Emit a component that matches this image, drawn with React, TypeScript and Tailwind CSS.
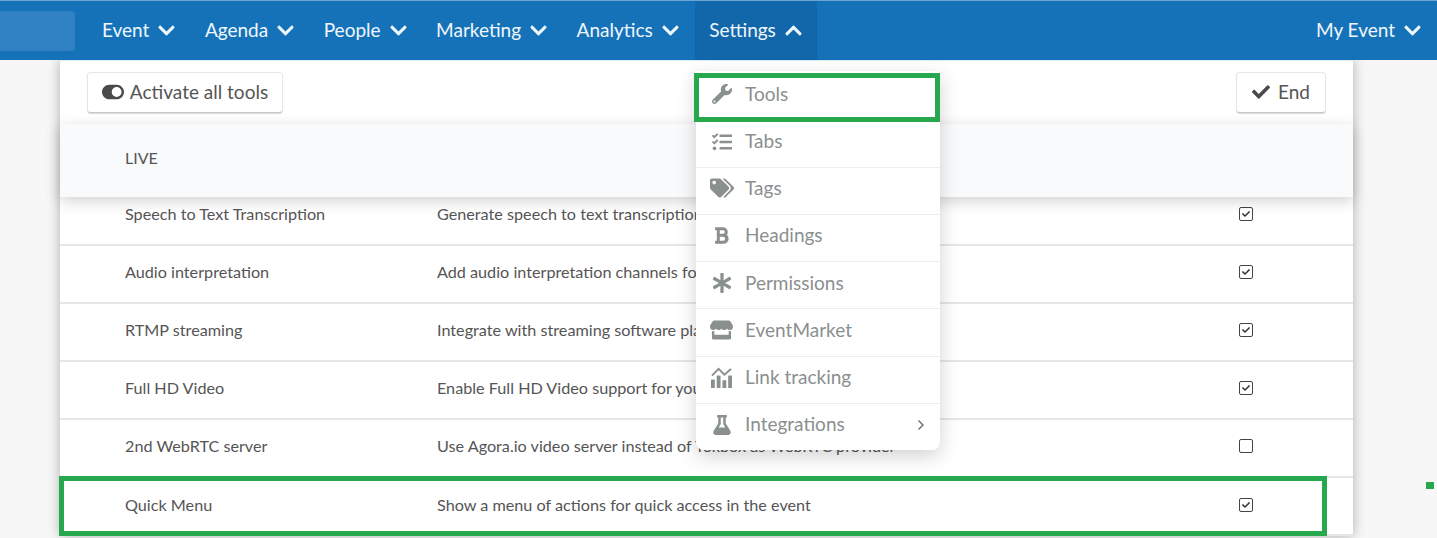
import React from 'react';
import { ChevronRight } from 'lucide-react';
import { FaAsterisk, FaBold, FaCheck, FaChevronDown, FaChevronUp, FaFlask, FaStore, FaTags, FaTasks, FaToggleOn, FaWrench } from 'react-icons/fa';

const navItems = ['Event', 'Agenda', 'People', 'Marketing', 'Analytics'];

const rows = [
  { name: 'Speech to Text Transcription', desc: 'Generate speech to text transcription for your sessions', checked: true, cls: 'h-[49px] pb-[13px]' },
  { name: 'Audio interpretation', desc: 'Add audio interpretation channels for your sessions', checked: true, cls: 'h-[58px] pb-[4px]' },
  { name: 'RTMP streaming', desc: 'Integrate with streaming software platforms', checked: true, cls: 'h-[58px] pb-[4px]' },
  { name: 'Full HD Video', desc: 'Enable Full HD Video support for your sessions', checked: true, cls: 'h-[58px] pb-[4px]' },
  { name: '2nd WebRTC server', desc: 'Use Agora.io video server instead of Tokbox as WebRTC provider', checked: false, cls: 'h-[58px] pb-[4px]' },
  { name: 'Quick Menu', desc: 'Show a menu of actions for quick access in the event', checked: true, cls: 'h-[58px] pb-[2px]' },
];

function LinkTrackingIcon() {
  return (
    <svg viewBox="0 0 24 22" className="w-[23px] h-[21px]" fill="currentColor">
      <rect x="1" y="13" width="4" height="9" rx="0.5" />
      <rect x="7" y="9" width="4" height="13" rx="0.5" />
      <rect x="13" y="14" width="4" height="8" rx="0.5" />
      <rect x="19" y="9" width="4" height="13" rx="0.5" />
      <path d="M2 9 L9 2 L15 8 L22 2" fill="none" stroke="currentColor" strokeWidth="2" />
    </svg>
  );
}

const menuItems = [
  { label: 'Tools', icon: <FaWrench className="w-5 h-5" />, cls: 'h-[51px] pb-[4px]' },
  { label: 'Tabs', icon: <FaTasks className="w-5 h-5" />, cls: 'h-[46px] pb-[6px]' },
  { label: 'Tags', icon: <FaTags className="w-6 h-6" />, cls: 'h-[47px] pb-[6px]' },
  { label: 'Headings', icon: <FaBold className="w-[15px] h-[19px]" />, cls: 'h-[47px] pb-[6px]' },
  { label: 'Permissions', icon: <FaAsterisk className="w-5 h-5" />, cls: 'h-[47px] pb-[4px]' },
  { label: 'EventMarket', icon: <FaStore className="w-[23px] h-5" />, cls: 'h-[48px] pb-[5px]' },
  { label: 'Link tracking', icon: <LinkTrackingIcon />, cls: 'h-[47px] pb-[6px]' },
  { label: 'Integrations', icon: <FaFlask className="w-5 h-5" />, cls: 'h-[46px] pb-[5px]' },
];

function Checkbox({ checked }: { checked: boolean }) {
  return (
    <span className="w-[14px] h-[14px] border-[1.5px] border-[#444] rounded-[2px] flex items-center justify-center bg-white">
      {checked && <FaCheck className="w-[8px] h-[8px] text-[#333]" />}
    </span>
  );
}

export default function App() {
  return (
    <div className="relative w-[1437px] h-[538px] overflow-hidden bg-[#f7f7f7] font-['Lato','Liberation_Sans',sans-serif]">
      <header className="relative z-20 h-[60px] bg-[#1572b9] border-t border-[#6ba4d3] flex items-center text-[19px] text-[#eef7fc]">
        <div className="w-[75px] h-[40px] bg-[#3182c4] rounded-r-[4px] shrink-0" />
        <nav className="flex items-center ml-[14px] h-full">
          {navItems.map(item => (
            <div key={item} className="flex items-center gap-[8px] pl-[13px] pr-[15.5px] h-full">
              <span>{item}</span>
              <FaChevronDown className="w-[19px] h-[19px]" />
            </div>
          ))}
          <div className="flex items-center gap-[8px] pl-[14px] pr-[14px] h-full bg-[#1267aa]">
            <span>Settings</span>
            <FaChevronUp className="w-[19px] h-[19px]" />
          </div>
        </nav>
        <div className="ml-auto mr-[15px] flex items-center gap-[8px]">
          <span>My Event</span>
          <FaChevronDown className="w-[19px] h-[19px]" />
        </div>
      </header>

      <main className="relative mx-[60px] w-[1293px] bg-white shadow-[0_0_12px_rgba(0,0,0,0.3)]">
        <div className="h-[64px] flex items-center justify-between px-[27px] pb-[1px] border-t border-[#dcecf5]">
          <button className="h-[41px] w-[196px] flex items-center justify-center gap-[6px] bg-white border border-[#e6e6e6] border-b-[#c8c8c8] rounded-[4px] shadow-[0_1px_1px_rgba(0,0,0,0.15)] text-[19px] text-[#555]">
            <FaToggleOn className="w-[22px] h-[20px] text-[#4a4a4a]" />
            Activate all tools
          </button>
          <button className="h-[41px] w-[90px] flex items-center justify-center gap-[8px] bg-white border border-[#e6e6e6] border-b-[#c8c8c8] rounded-[4px] shadow-[0_1px_1px_rgba(0,0,0,0.15)] text-[19px] text-[#555]">
            <FaCheck className="w-[18px] h-[18px] text-[#4a4a4a]" />
            End
          </button>
        </div>

        <div className="relative z-10 h-[73px] bg-[#f9fafc] pl-[65px] pt-[22px] text-[16px] text-[#555] shadow-[0_4px_14px_rgba(0,0,0,0.18)]">
          LIVE
        </div>

        {rows.map(row => (
          <div key={row.name} className={`${row.cls} flex items-center border-b-2 border-[#e6e6e6] pl-[65px] pr-[100px] text-[16.2px] text-[#555]`}>
            <span className="w-[312px] shrink-0">{row.name}</span>
            <span className="flex-1">{row.desc}</span>
            <Checkbox checked={row.checked} />
          </div>
        ))}
      </main>

      <div className="absolute z-30 left-[696px] top-[71px] w-[244px] bg-white rounded-b-[8px] rounded-t-[2px] shadow-[0_6px_20px_rgba(0,0,0,0.18)] text-[19px] text-[#8a8f8f]">
        {menuItems.map(item => (
          <div key={item.label} className={`${item.cls} flex items-center border-b border-[#ececec] last:border-b-0`}>
            <span className="w-[49px] flex justify-center pl-[2px] shrink-0">{item.icon}</span>
            <span>{item.label}</span>
            {item.label === 'Integrations' && <ChevronRight className="ml-auto mr-[11px] w-[16px] h-[18px] text-[#777]" strokeWidth={2.5} />}
          </div>
        ))}
      </div>

      <div className="absolute z-40 left-[694px] top-[73px] w-[246px] h-[49px] border-[5px] border-[#28a84e]" />
      <div className="absolute z-40 left-[59px] top-[476px] w-[1268px] h-[60px] border-[5px] border-[#28a84e]" />
      <div className="absolute z-40 left-[1426px] top-[482px] w-[8px] h-[7px] bg-[#28a84e]" />
    </div>
  );
}
